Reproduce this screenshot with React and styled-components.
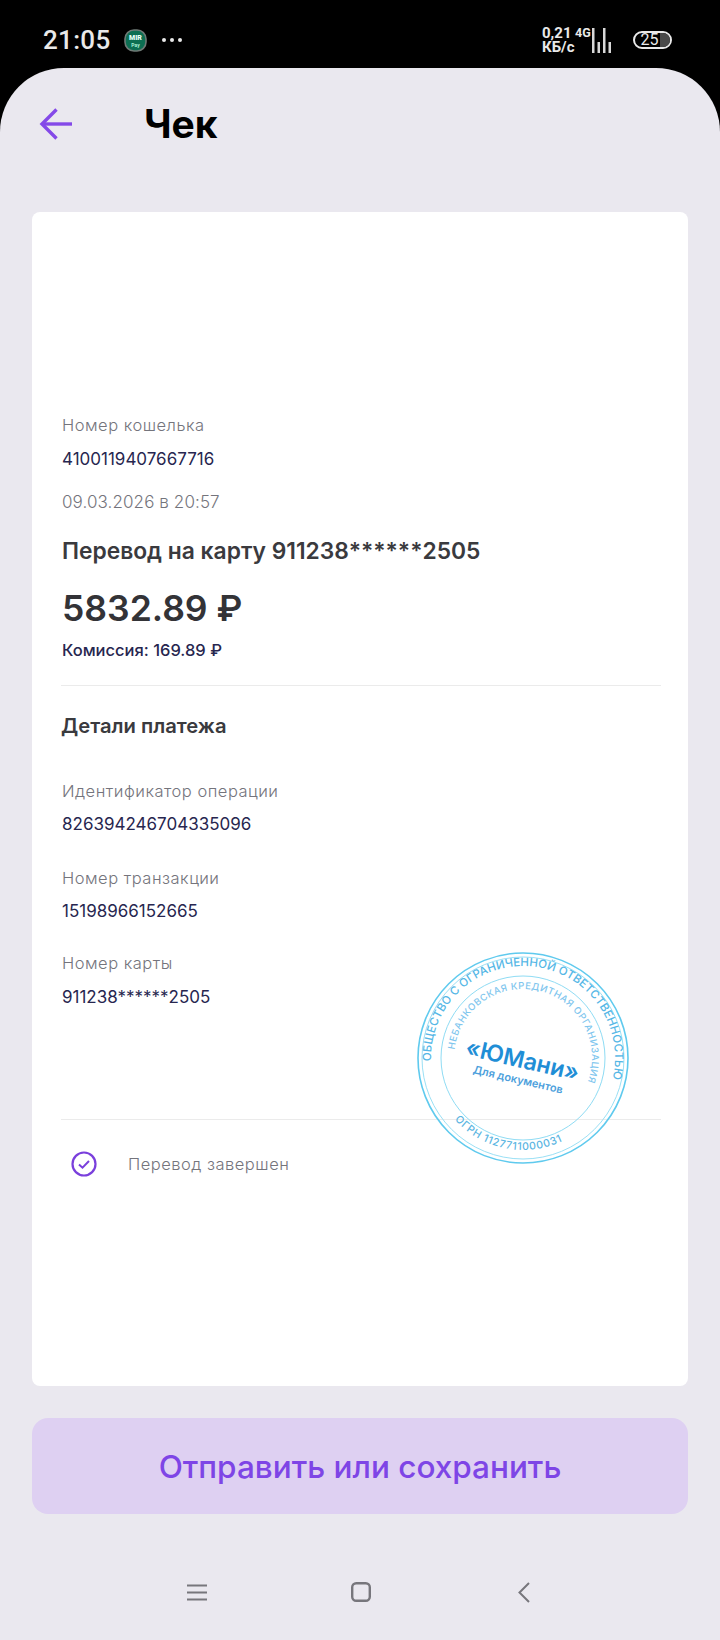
import styled, { createGlobalStyle } from 'styled-components';

const GlobalStyle = createGlobalStyle`
  html, body {
    margin: 0;
    padding: 0;
    background: #000;
  }
  * {
    box-sizing: border-box;
  }
`;

const Phone = styled.div`
  display: flex;
  flex-direction: column;
  width: 720px;
  height: 1640px;
  background: #000;
  font-family: Inter, 'Noto Sans', sans-serif;
  overflow: hidden;
`;

const StatusBar = styled.div`
  display: flex;
  align-items: center;
  justify-content: space-between;
  flex: none;
  height: 68px;
  padding: 12px 48px 0 43px;
  color: #e9e9e9;
`;

const StatusGroup = styled.div`
  display: flex;
  align-items: center;
  gap: ${props => props.gap || 0}px;
`;

const Time = styled.span`
  font-family: Roboto, sans-serif;
  font-size: 26px;
  font-weight: 500;
  letter-spacing: 0.3px;
`;

const Speed = styled.div`
  width: 33px;
  font-family: Roboto, sans-serif;
  font-size: 15px;
  line-height: 14px;
  font-weight: 700;
  white-space: nowrap;
`;

const Network = styled.span`
  width: 17px;
  margin-bottom: 14px;
  font-family: Roboto, sans-serif;
  font-size: 12.5px;
  line-height: 14px;
  font-weight: 700;
`;

const Battery = styled.div`
  position: relative;
  display: flex;
  align-items: center;
  justify-content: center;
  width: 39px;
  height: 18px;
  margin-left: 21px;
  padding-right: 6px;
  border: 2px solid #e9e9e9;
  border-radius: 9px;
  font-family: Roboto, sans-serif;
  font-size: 16px;
  line-height: 14px;

  &::after {
    content: '';
    position: absolute;
    top: 0;
    right: 0;
    bottom: 0;
    width: 10px;
    border-radius: 0 7px 7px 0;
    background: #4a4a4a;
  }
`;

const Sheet = styled.div`
  display: flex;
  flex-direction: column;
  flex: 1;
  padding: 0 32px;
  background: #eae8ef;
  border-radius: 64px 64px 0 0;
`;

const Header = styled.div`
  display: flex;
  align-items: center;
  flex: none;
  height: 112px;
  padding-left: 7px;
`;

const Title = styled.h1`
  margin: 0 0 0 71px;
  color: #000;
  font-size: 39px;
  font-weight: 700;
  line-height: 44px;
`;

const Card = styled.div`
  position: relative;
  flex: none;
  height: 1174px;
  margin-top: 32px;
  padding: 201px 27px 0 29px;
  background: #fff;
  border-radius: 8px;
`;

const Label = styled.div`
  margin-top: ${props => props.top || 0}px;
  padding-left: 1px;
  color: #74747c;
  font-size: 16.5px;
  font-weight: 300;
  line-height: 24px;
  letter-spacing: 0.5px;
`;

const Value = styled.div`
  margin-top: ${props => props.top || 9}px;
  padding-left: 1px;
  color: #27264f;
  font-size: 17px;
  font-weight: 400;
  line-height: 24px;
`;

const DateText = styled(Label)`
  margin-top: 19px;
  font-size: 17px;
  letter-spacing: 0.1px;
`;

const Transfer = styled.div`
  margin-top: 22px;
  padding-left: 1px;
  color: #3a3a3e;
  font-size: 22.8px;
  font-weight: 600;
  line-height: 30px;
`;

const Amount = styled.div`
  margin-top: 20px;
  padding-left: 1px;
  color: #333337;
  font-size: 35.5px;
  font-weight: 600;
  line-height: 46px;
`;

const Fee = styled.div`
  margin-top: 7px;
  padding-left: 1px;
  color: #27264f;
  font-size: 16.5px;
  font-weight: 500;
  line-height: 22px;
`;

const Divider = styled.div`
  height: 1px;
  background: #ebebeb;
  margin-top: ${props => props.top}px;
`;

const SectionTitle = styled.div`
  margin-top: 27px;
  color: #3a3a3e;
  font-size: 20.2px;
  font-weight: 600;
  line-height: 26px;
`;

const Status = styled.div`
  display: flex;
  align-items: center;
  gap: 31px;
  margin-top: 31px;
  padding-left: 10px;
  color: #74747c;
  font-size: 16.5px;
  font-weight: 300;
  line-height: 24px;
  letter-spacing: 0.5px;
`;

const Stamp = styled.svg`
  position: absolute;
  top: 738px;
  left: 383px;
  width: 216px;
  height: 216px;
`;

const SendButton = styled.button`
  flex: none;
  height: 96px;
  margin-top: 32px;
  padding: 0;
  border: 0;
  border-radius: 16px;
  background: #ded0f2;
  color: #7e45e6;
  font-family: inherit;
  font-size: 31.5px;
  font-weight: 500;
`;

const NavBar = styled.div`
  display: flex;
  align-items: center;
  justify-content: space-between;
  flex: none;
  height: 20px;
  margin-top: 68px;
  padding: 0 158px 0 155px;
`;

const HomeSvg = styled.svg`
  margin-right: 4px;
`;

const MirPay = () => (
  <svg width="23" height="23" viewBox="0 0 23 23">
    <rect x="1" y="1" width="21" height="21" rx="9" fill="#0c6e52" stroke="#6f7a76" strokeWidth="1.6" />
    <text x="11.5" y="11" textAnchor="middle" fontFamily="Roboto, sans-serif" fontSize="7" fontWeight="900" fill="#eafff7">MIR</text>
    <text x="11.5" y="17.5" textAnchor="middle" fontFamily="Roboto, sans-serif" fontSize="5" fontWeight="700" fill="#a8efd4">Pay</text>
  </svg>
);

const Dots = () => (
  <svg width="22" height="6" viewBox="0 0 22 6" fill="#e9e9e9">
    <circle cx="3" cy="3" r="2" />
    <circle cx="11" cy="3" r="2" />
    <circle cx="19" cy="3" r="2" />
  </svg>
);

const Signal = () => (
  <svg width="20" height="25" viewBox="0 0 20 25" fill="#d8d8d8">
    <rect x="0" y="0" width="2.5" height="25" />
    <rect x="5.5" y="14" width="2.5" height="11" />
    <rect x="11" y="0" width="2.5" height="25" />
    <rect x="16.5" y="14" width="2.5" height="11" />
  </svg>
);

const BackArrow = () => (
  <svg width="34" height="32" viewBox="0 0 34 32" fill="none" stroke="#8449e8" strokeWidth="3.4">
    <path d="M33 16H3" />
    <path d="M17.5 1.5L3 16l14.5 14.5" />
  </svg>
);

const CheckIcon = () => (
  <svg width="26" height="26" viewBox="0 0 26 26" fill="none" stroke="#7a3fdc">
    <circle cx="13" cy="13" r="11.5" strokeWidth="2.2" />
    <path d="M8 13.5l3.5 3.2L18 10" strokeWidth="2" />
  </svg>
);

const StampMark = () => (
  <Stamp viewBox="0 0 216 216" fill="none">
    <defs>
      <path id="outerArc" d="M108 108m-92 0a92 92 0 1 1 184 0a92 92 0 1 1 -184 0" transform="rotate(-2 108 108)" />
      <path id="innerArc" d="M108 108m-69 0a69 69 0 1 1 138 0a69 69 0 1 1 -138 0" transform="rotate(7 108 108)" />
      <path id="bottomArc" d="M108 108m-92 0a92 92 0 0 0 184 0" transform="rotate(-6 108 108)" />
    </defs>
    <circle cx="108" cy="108" r="105" stroke="#5fcaee" strokeWidth="1.6" />
    <circle cx="108" cy="108" r="101" stroke="#9ae0f5" strokeWidth="1" />
    <circle cx="108" cy="108" r="82" stroke="#8fdcf4" strokeWidth="1" />
    <g fontFamily="Inter, sans-serif">
      <text fontSize="11.5" fontWeight="500" fill="#55b7e6" letterSpacing="0.05">
        <textPath href="#outerArc">ОБЩЕСТВО С ОГРАНИЧЕННОЙ ОТВЕТСТВЕННОСТЬЮ</textPath>
      </text>
      <text fontSize="9.5" fontWeight="500" fill="#7fc6ee" letterSpacing="0.5">
        <textPath href="#innerArc">НЕБАНКОВСКАЯ КРЕДИТНАЯ ОРГАНИЗАЦИЯ</textPath>
      </text>
      <text fontSize="10.5" fontWeight="500" fill="#5ab5e2" letterSpacing="0.7">
        <textPath href="#bottomArc" startOffset="20%">ОГРН 1127711000031</textPath>
      </text>
      <g transform="rotate(13 108 108)">
        <text x="108" y="118" textAnchor="middle" fontSize="23" fontWeight="600" fill="#1f8ed6">«ЮМани»</text>
        <text x="108" y="134" textAnchor="middle" fontSize="11" fontWeight="600" fill="#4d9fdc">Для документов</text>
      </g>
    </g>
  </Stamp>
);

const MenuIcon = () => (
  <svg width="20" height="17" viewBox="0 0 20 17" fill="none" stroke="#77767c" strokeWidth="2">
    <path d="M0 1.5h20M0 8.5h20M0 15.5h20" />
  </svg>
);

const HomeIcon = () => (
  <HomeSvg width="20" height="20" viewBox="0 0 20 20" fill="none" stroke="#77767c" strokeWidth="2.4">
    <rect x="1.2" y="1.2" width="17.6" height="17.6" rx="4" />
  </HomeSvg>
);

const BackIcon = () => (
  <svg width="12" height="21" viewBox="0 0 12 21" fill="none" stroke="#77767c" strokeWidth="2">
    <path d="M11 1L1.5 10.5 11 20" />
  </svg>
);

export default function App() {
  return (
    <Phone>
      <GlobalStyle />
      <StatusBar>
        <StatusGroup gap={14}>
          <Time>21:05</Time>
          <MirPay />
          <Dots />
        </StatusGroup>
        <StatusGroup>
          <Speed>
            0,21
            <br />
            КБ/с
          </Speed>
          <Network>4G</Network>
          <Signal />
          <Battery>25</Battery>
        </StatusGroup>
      </StatusBar>
      <Sheet>
        <Header>
          <BackArrow />
          <Title>Чек</Title>
        </Header>
        <Card>
          <Label>Номер кошелька</Label>
          <Value top={10}>4100119407667716</Value>
          <DateText>09.03.2026 в 20:57</DateText>
          <Transfer>Перевод на карту 911238******2505</Transfer>
          <Amount>5832.89 ₽</Amount>
          <Fee>Комиссия: 169.89 ₽</Fee>
          <Divider top={24} />
          <SectionTitle>Детали платежа</SectionTitle>
          <Label top={40}>Идентификатор операции</Label>
          <Value>826394246704335096</Value>
          <Label top={30}>Номер транзакции</Label>
          <Value>15198966152665</Value>
          <Label top={28}>Номер карты</Label>
          <Value top={10}>911238******2505</Value>
          <Divider top={110} />
          <Status>
            <CheckIcon />
            Перевод завершен
          </Status>
          <StampMark />
        </Card>
        <SendButton>Отправить или сохранить</SendButton>
        <NavBar>
          <MenuIcon />
          <HomeIcon />
          <BackIcon />
        </NavBar>
      </Sheet>
    </Phone>
  );
}
